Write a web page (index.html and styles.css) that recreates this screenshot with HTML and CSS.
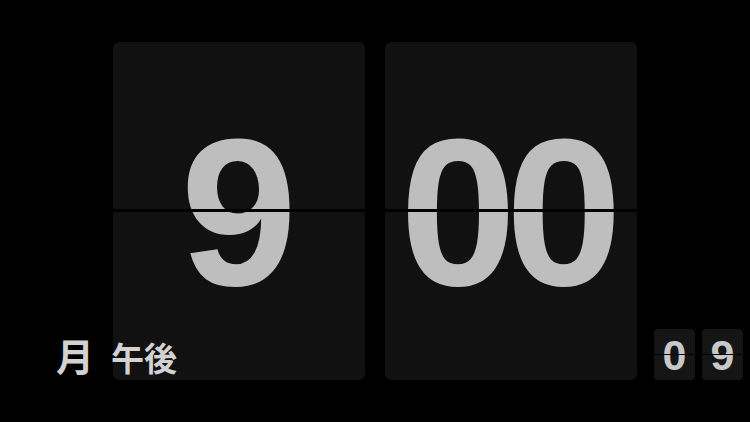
FILE: index.html
```html
<!DOCTYPE html>
<html lang="ja">
<head>
<meta charset="utf-8">
<title>Flip Clock</title>
<link rel="stylesheet" href="styles.css">
</head>
<body>
<main class="clock">
  <div class="card">
    <span class="digits">9</span>
    <div class="split"></div>
  </div>
  <div class="card">
    <span class="digits pair">00</span>
    <div class="split"></div>
  </div>
</main>
<div class="label">
  <span class="day">月</span>
  <span class="ampm">午後</span>
</div>
<div class="seconds">
  <div class="mini"><span class="mini-digit">0</span><div class="mini-split"></div></div>
  <div class="mini"><span class="mini-digit">9</span><div class="mini-split"></div></div>
</div>
</body>
</html>
```

FILE: styles.css
```css
html, body {
  margin: 0;
  padding: 0;
  background: #000;
  width: 750px;
  height: 422px;
  overflow: hidden;
  font-family: "Liberation Sans", Arial, sans-serif;
}
.clock {
  display: flex;
  justify-content: center;
  gap: 20px;
  padding-top: 42px;
}
.card {
  position: relative;
  width: 252px;
  height: 338px;
  background: #111111;
  border-radius: 6px;
  display: flex;
  align-items: center;
  justify-content: center;
  overflow: hidden;
}
.digits {
  font-size: 210px;
  font-weight: 700;
  line-height: 1;
  color: #bebebe;
  padding-top: 4px;
}
.pair {
  letter-spacing: -11px;
  padding-right: 11px;
}
.split {
  position: absolute;
  left: 0;
  right: 0;
  top: 167px;
  height: 3px;
  background: #000;
}
.label {
  position: absolute;
  left: 56px;
  top: 330px;
  display: flex;
  align-items: baseline;
  gap: 17px;
  font-family: "Noto Sans CJK JP", "Noto Sans", sans-serif;
  font-weight: 700;
  color: #d2d2d2;
}
.day {
  font-size: 38px;
  line-height: 50px;
}
.ampm {
  font-size: 33px;
  line-height: 50px;
}
.seconds {
  position: absolute;
  right: 7px;
  top: 329px;
  display: flex;
  gap: 7px;
}
.mini {
  position: relative;
  width: 41px;
  height: 51px;
  background: #151515;
  border-radius: 4px;
  display: flex;
  align-items: center;
  justify-content: center;
  overflow: hidden;
}
.mini-digit {
  font-size: 43px;
  font-weight: 700;
  line-height: 1;
  color: #c8c8c8;
  padding-top: 1px;
}
.mini-split {
  position: absolute;
  left: 0;
  right: 0;
  top: 25px;
  height: 1px;
  background: #000;
}
```
